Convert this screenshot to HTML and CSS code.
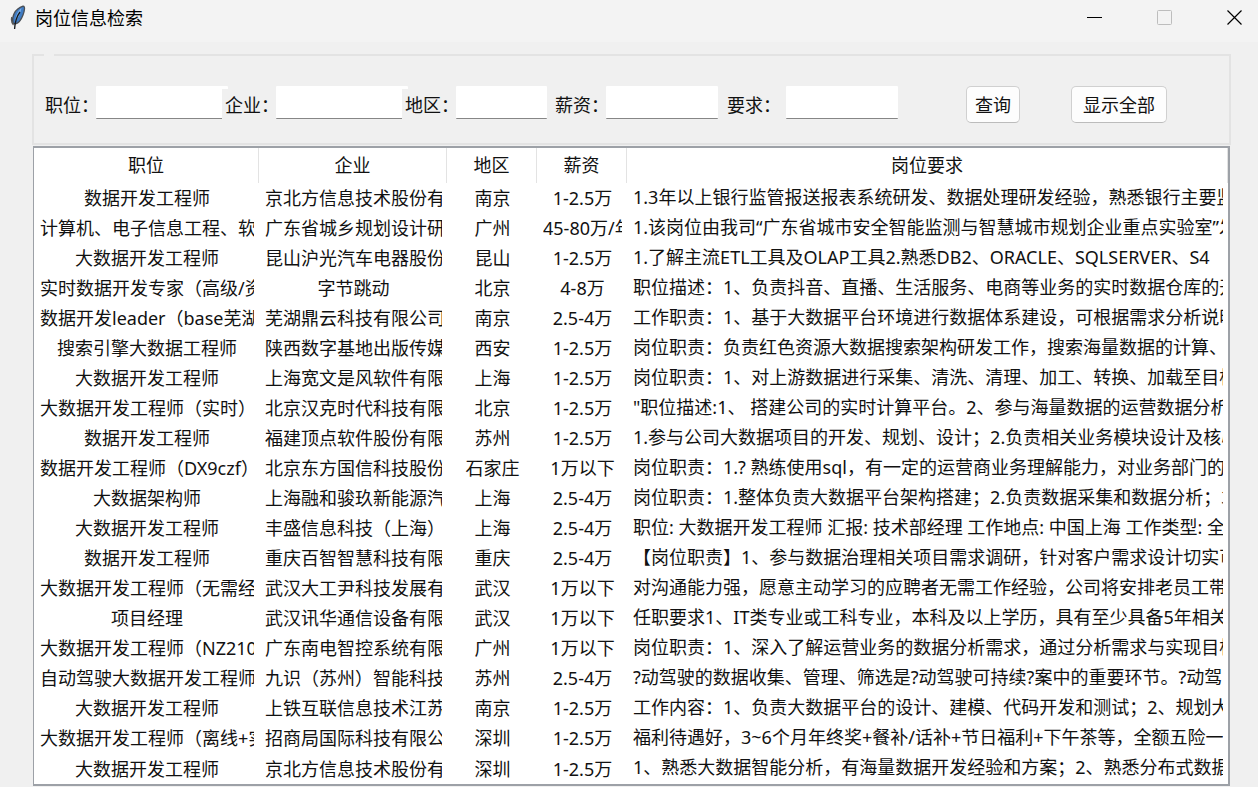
FILE: index.html
```html
<!DOCTYPE html>
<html lang="zh-CN">
<head>
<meta charset="utf-8">
<title>岗位信息检索</title>
<link rel="stylesheet" href="styles.css">
</head>
<body>
<header class="titlebar">
  <svg class="app-icon" width="16" height="26" viewBox="0 0 16 26" aria-hidden="true">
    <path d="M3 18C1.500 12 4.500 4 13 1.200C15.500 1 14.500 6 13 10C11.500 14 9 18 5.500 19Z" fill="#3f7cc4" stroke="#4a4f56" stroke-width="1.300"/>
    <path d="M11.500 3C7.500 6 5.500 11 5 17C8.500 13 10.500 8 11.500 3Z" fill="#79aee8"/>
    <path d="M10 7C7 11 5 15 4.600 24" fill="none" stroke="#15181c" stroke-width="1.300"/>
    <path d="M1.800 12C1 15 1.600 18 3.500 20" fill="none" stroke="#555" stroke-width="1.200"/>
  </svg>
  <h1 class="window-title">岗位信息检索</h1>
  <div class="window-controls">
    <button class="window-button" type="button" aria-label="最小化"><svg width="16" height="16" viewBox="0 0 16 16"><path d="M0 7.500H15" stroke="#000" fill="none"/></svg></button>
    <button class="window-button" type="button" aria-label="最大化" disabled><svg width="16" height="16" viewBox="0 0 16 16"><rect x="0.500" y="0.500" width="14" height="14" rx="1" stroke="#bdbdbd" fill="none"/></svg></button>
    <button class="window-button" type="button" aria-label="关闭"><svg width="16" height="16" viewBox="0 0 16 16"><path d="M0.500 0.500L14.500 14.500M14.500 0.500L0.500 14.500" stroke="#000" stroke-width="1.200" fill="none"/></svg></button>
  </div>
</header>
<main class="content">
  <form>
    <fieldset class="search">
      <legend class="search-legend"></legend>
      <div class="search-row">
        <div class="field field-wide"><label for="job">职位：</label><input id="job" type="text"></div>
        <div class="field field-wide"><label for="company">企业：</label><input id="company" type="text"></div>
        <div class="field field-area"><label for="area">地区：</label><input id="area" type="text"></div>
        <div class="field field-salary"><label for="salary">薪资：</label><input id="salary" type="text"></div>
        <div class="field field-need"><label for="need">要求：</label><input id="need" type="text"></div>
        <div class="actions">
          <button class="action" type="button">查询</button>
          <button class="action action-all" type="button">显示全部</button>
        </div>
      </div>
    </fieldset>
  </form>
  <table class="results">
    <colgroup><col class="col-job"><col class="col-company"><col class="col-area"><col class="col-salary"><col></colgroup>
    <thead><tr><th>职位</th><th>企业</th><th>地区</th><th>薪资</th><th>岗位要求</th></tr></thead>
    <tbody>
      <tr><td><div>数据开发工程师</div></td><td><div>京北方信息技术股份有</div></td><td><div>南京</div></td><td><div>1-2.5万</div></td><td><div>1.3年以上银行监管报送报表系统研发、数据处理研发经验，熟悉银行主要监</div></td></tr>
      <tr><td><div>计算机、电子信息工程、软</div></td><td><div>广东省城乡规划设计研</div></td><td><div>广州</div></td><td><div>45-80万/年</div></td><td><div>1.该岗位由我司“广东省城市安全智能监测与智慧城市规划企业重点实验室”发</div></td></tr>
      <tr><td><div>大数据开发工程师</div></td><td><div>昆山沪光汽车电器股份</div></td><td><div>昆山</div></td><td><div>1-2.5万</div></td><td><div>1.了解主流ETL工具及OLAP工具2.熟悉DB2、ORACLE、SQLSERVER、S4</div></td></tr>
      <tr><td><div>实时数据开发专家（高级/资</div></td><td><div>字节跳动</div></td><td><div>北京</div></td><td><div>4-8万</div></td><td><div>职位描述：1、负责抖音、直播、生活服务、电商等业务的实时数据仓库的开</div></td></tr>
      <tr><td><div>数据开发leader（base芜湖</div></td><td><div>芜湖鼎云科技有限公司</div></td><td><div>南京</div></td><td><div>2.5-4万</div></td><td><div>工作职责：1、基于大数据平台环境进行数据体系建设，可根据需求分析说明</div></td></tr>
      <tr><td><div>搜索引擎大数据工程师</div></td><td><div>陕西数字基地出版传媒</div></td><td><div>西安</div></td><td><div>1-2.5万</div></td><td><div>岗位职责：负责红色资源大数据搜索架构研发工作，搜索海量数据的计算、</div></td></tr>
      <tr><td><div>大数据开发工程师</div></td><td><div>上海宽文是风软件有限</div></td><td><div>上海</div></td><td><div>1-2.5万</div></td><td><div>岗位职责：1、对上游数据进行采集、清洗、清理、加工、转换、加载至目标</div></td></tr>
      <tr><td><div>大数据开发工程师（实时）</div></td><td><div>北京汉克时代科技有限</div></td><td><div>北京</div></td><td><div>1-2.5万</div></td><td><div>"职位描述:1、 搭建公司的实时计算平台。2、参与海量数据的运营数据分析</div></td></tr>
      <tr><td><div>数据开发工程师</div></td><td><div>福建顶点软件股份有限</div></td><td><div>苏州</div></td><td><div>1-2.5万</div></td><td><div>1.参与公司大数据项目的开发、规划、设计；2.负责相关业务模块设计及核心</div></td></tr>
      <tr><td><div>数据开发工程师（DX9czf）</div></td><td><div>北京东方国信科技股份</div></td><td><div>石家庄</div></td><td><div>1万以下</div></td><td><div>岗位职责：1.? 熟练使用sql，有一定的运营商业务理解能力，对业务部门的</div></td></tr>
      <tr><td><div>大数据架构师</div></td><td><div>上海融和骏玖新能源汽</div></td><td><div>上海</div></td><td><div>2.5-4万</div></td><td><div>岗位职责：1.整体负责大数据平台架构搭建；2.负责数据采集和数据分析；3</div></td></tr>
      <tr><td><div>大数据开发工程师</div></td><td><div>丰盛信息科技（上海）</div></td><td><div>上海</div></td><td><div>2.5-4万</div></td><td><div>职位: 大数据开发工程师 汇报: 技术部经理 工作地点: 中国上海 工作类型: 全</div></td></tr>
      <tr><td><div>数据开发工程师</div></td><td><div>重庆百智智慧科技有限</div></td><td><div>重庆</div></td><td><div>2.5-4万</div></td><td><div>【岗位职责】1、参与数据治理相关项目需求调研，针对客户需求设计切实可</div></td></tr>
      <tr><td><div>大数据开发工程师（无需经</div></td><td><div>武汉大工尹科技发展有</div></td><td><div>武汉</div></td><td><div>1万以下</div></td><td><div>对沟通能力强，愿意主动学习的应聘者无需工作经验，公司将安排老员工带</div></td></tr>
      <tr><td><div>项目经理</div></td><td><div>武汉讯华通信设备有限</div></td><td><div>武汉</div></td><td><div>1万以下</div></td><td><div>任职要求1、IT类专业或工科专业，本科及以上学历，具有至少具备5年相关</div></td></tr>
      <tr><td><div>大数据开发工程师（NZ210</div></td><td><div>广东南电智控系统有限</div></td><td><div>广州</div></td><td><div>1万以下</div></td><td><div>岗位职责：1、深入了解运营业务的数据分析需求，通过分析需求与实现目标</div></td></tr>
      <tr><td><div>自动驾驶大数据开发工程师</div></td><td><div>九识（苏州）智能科技</div></td><td><div>苏州</div></td><td><div>2.5-4万</div></td><td><div>?动驾驶的数据收集、管理、筛选是?动驾驶可持续?案中的重要环节。?动驾</div></td></tr>
      <tr><td><div>大数据开发工程师</div></td><td><div>上铁互联信息技术江苏</div></td><td><div>南京</div></td><td><div>1-2.5万</div></td><td><div>工作内容：1、负责大数据平台的设计、建模、代码开发和测试；2、规划大</div></td></tr>
      <tr><td><div>大数据开发工程师（离线+实</div></td><td><div>招商局国际科技有限公</div></td><td><div>深圳</div></td><td><div>1-2.5万</div></td><td><div>福利待遇好，3~6个月年终奖+餐补/话补+节日福利+下午茶等，全额五险一</div></td></tr>
      <tr><td><div>大数据开发工程师</div></td><td><div>京北方信息技术股份有</div></td><td><div>深圳</div></td><td><div>1-2.5万</div></td><td><div>1、熟悉大数据智能分析，有海量数据开发经验和方案；2、熟悉分布式数据</div></td></tr>
    </tbody>
  </table>
</main>
</body>
</html>
```
FILE: styles.css
```css
* {
  box-sizing: border-box;
}

body {
  margin: 0;
  background: #f0f0f0;
  color: #111;
  font: 18px/24px "Noto Sans", "Noto Sans CJK SC", sans-serif;
}

button,
input {
  font: inherit;
  color: inherit;
}

.titlebar {
  display: flex;
  align-items: center;
  height: 42px;
  padding: 0 15px 6px 10px;
  background: #f3f3f3;
}

.app-icon {
  flex: none;
}

.window-title {
  margin: 0 auto 0 9px;
  color: #000;
  font-size: 18px;
  font-weight: 400;
}

.window-controls {
  display: flex;
  gap: 54px;
}

.window-button {
  padding: 0;
  border: 0;
  background: none;
}

.window-button svg {
  display: block;
}

.content {
  padding: 12px 27px 0 32px;
}

.search {
  min-width: 0;
  height: 91px;
  margin: 0;
  padding: 0 8px;
  border: 2px solid #e3e3e3;
}

.search-legend {
  width: 10px;
  height: 2px;
  margin-left: 2px;
  padding: 0;
}

.search-row {
  display: flex;
  align-items: flex-start;
  padding-top: 30px;
}

.field {
  display: flex;
  flex: none;
}

.field label {
  flex: none;
  width: 54px;
  height: 32px;
  margin-top: 3px;
  padding-left: 3px;
  background: #f0f0f0;
  line-height: 32px;
  white-space: nowrap;
}

.field input {
  flex: none;
  height: 33px;
  padding: 0 6px;
  border: 0;
  border-bottom: 1px solid #868686;
  border-radius: 1px;
  background: #fff;
  outline: none;
}

.field-wide {
  width: 180px;
}

.field-wide input {
  width: 132px;
}

.field-area {
  width: 150px;
}

.field-area input {
  width: 91px;
}

.field-salary {
  width: 172px;
}

.field-need label {
  width: 62px;
}

.field-salary input,
.field-need input {
  width: 112px;
}

.actions {
  display: flex;
  gap: 51px;
  margin-left: 68px;
}

.action {
  width: 54px;
  height: 37px;
  padding: 0;
  border: 1px solid #d0d0d0;
  border-bottom-color: #bcbcbc;
  border-radius: 5px;
  background: #fdfdfd;
}

.action-all {
  width: 96px;
}

.results {
  width: calc(100% - 2px);
  margin: 1px 0 0 1px;
  border: 2px solid #9da1a7;
  border-width: 2px 2px 2px 1px;
  border-collapse: separate;
  border-spacing: 0;
  background: #fff;
  table-layout: fixed;
}

.col-job {
  width: 225px;
}

.col-company {
  width: 188px;
}

.col-area,
.col-salary {
  width: 90px;
}

.results th {
  height: 35px;
  padding: 0 0 2px;
  border-right: 1px solid #e3e3e3;
  font-weight: 400;
}

.results td {
  height: 30px;
  padding: 0 5px 0 6px;
  text-align: center;
}

.results td:last-child {
  padding-bottom: 3px;
  text-align: left;
}

.results tr:last-child td {
  height: 31px;
}

.results td div {
  overflow: hidden;
  white-space: nowrap;
}
```
